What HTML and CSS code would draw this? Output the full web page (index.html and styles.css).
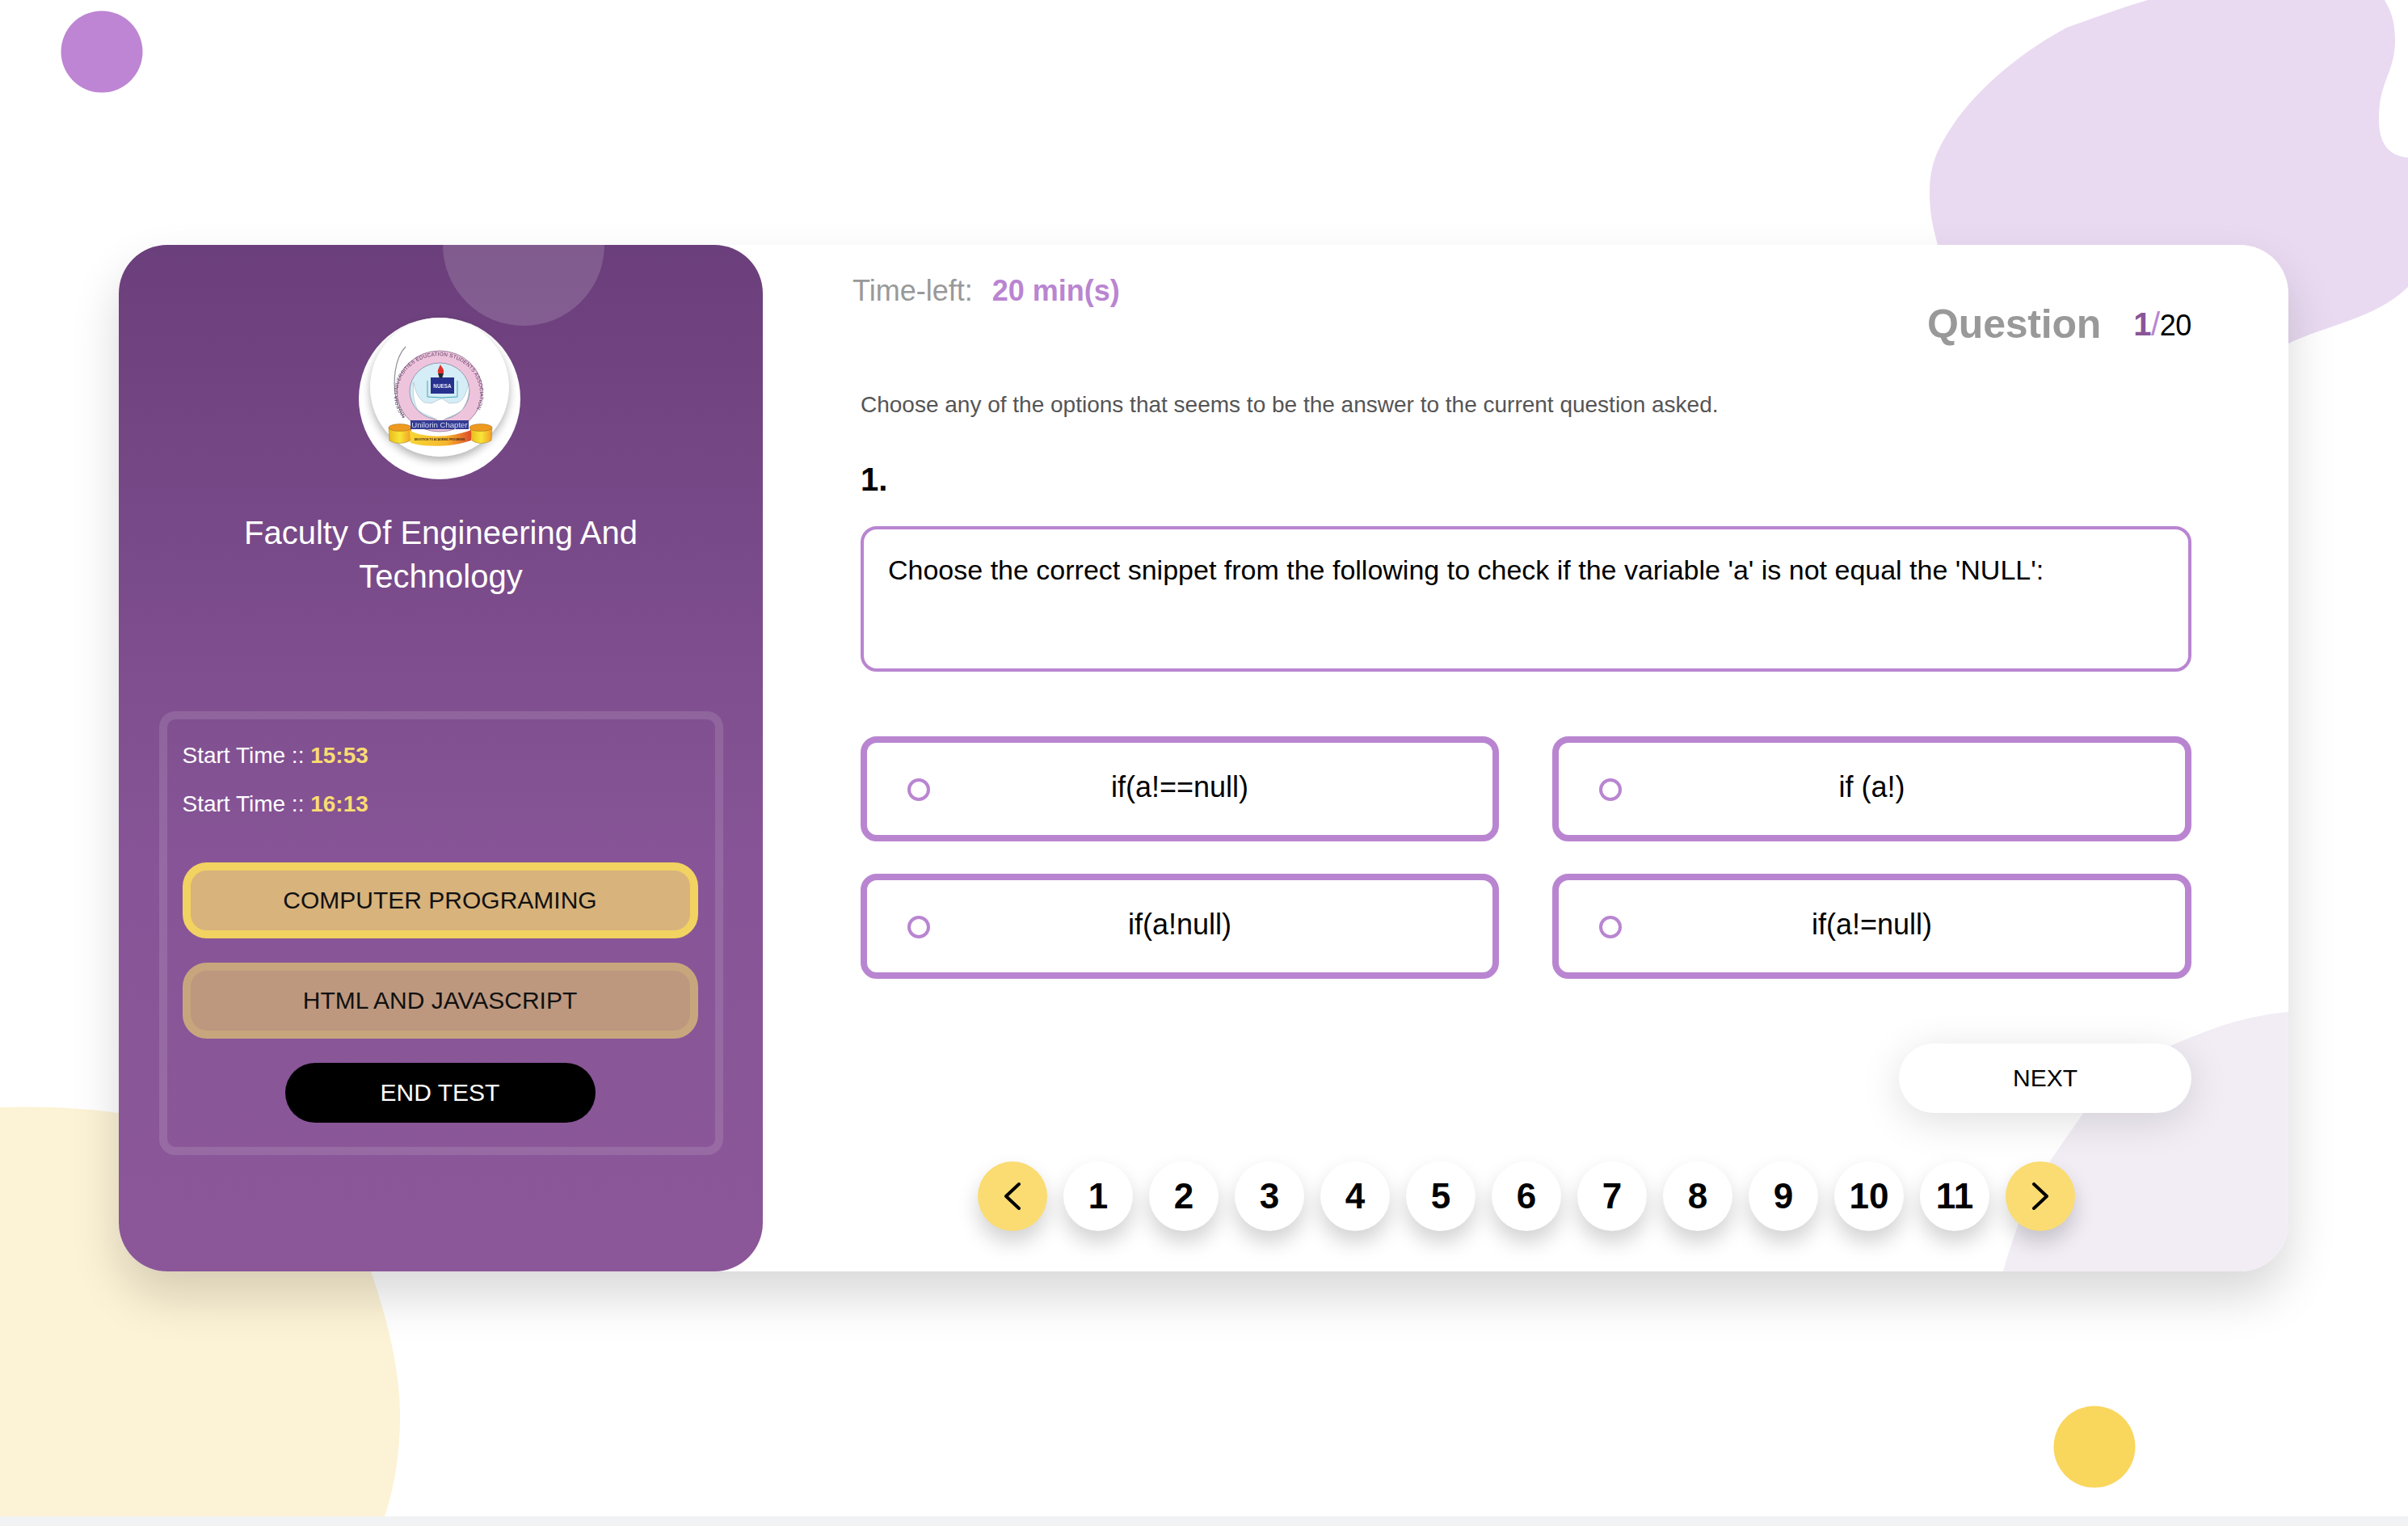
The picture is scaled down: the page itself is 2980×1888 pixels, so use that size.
FILE: index.html
```html
<!DOCTYPE html>
<html lang="en">
<head>
<meta charset="utf-8">
<title>Test</title>
<link rel="stylesheet" href="styles.css">
</head>
<body>
<div class="page">
  <svg class="backdrop" viewBox="0 0 2980 1876" aria-hidden="true">
    <path class="blob-purple" d="M2658 0C2624 10 2592 22 2558 34C2505 62 2452 105 2420 150C2396 185 2388 205 2388 240C2388 265 2393 285 2398 303L2832 425C2880 402 2940 394 2980 355L2980 195C2950 192 2944 170 2944 147C2944 100 2964 90 2964 50C2964 25 2958 12 2951 0Z"/>
    <path class="blob-yellow" d="M0 1370C60 1368 110 1372 147 1377L459 1573C482 1640 495 1700 495 1752C495 1800 488 1840 476 1876L0 1876Z"/>
    <circle class="dot-purple" cx="126" cy="64" r="50.5"/>
    <circle class="dot-yellow" cx="2592" cy="1790" r="50.5"/>
  </svg>

  <main class="card">
    <aside class="side">
      <div class="side-bubble"></div>
      <div class="logo">
        <div class="logo-inner">
          <svg class="emblem" viewBox="0 0 200 200">
            <defs>
              <path id="ringtext" d="M58 122A51 47 0 1 1 143 118"/>
              <linearGradient id="ribbon" x1="0" x2="1" y1="0" y2="0">
                <stop offset="0" stop-color="#f7d634"/><stop offset=".6" stop-color="#f6b52e"/><stop offset="1" stop-color="#dd4e2a"/>
              </linearGradient>
              <linearGradient id="cup" x1="0" x2="1" y1="0" y2="0">
                <stop offset="0" stop-color="#e9b91c"/><stop offset=".5" stop-color="#f8e538"/><stop offset="1" stop-color="#f29a25"/>
              </linearGradient>
            </defs>
            <g class="emblem-art">
              <path class="swoosh" d="M58 36C44 50 42 80 46 100C48 110 52 118 56 124"/>
              <ellipse class="ring" cx="100" cy="91" rx="53" ry="50"/>
              <ellipse class="disc" cx="100" cy="91" rx="37" ry="35"/>
              <text class="ring-label"><textPath href="#ringtext">NIGERIA UNIVERSITIES EDUCATION STUDENTS ASSOCIATION</textPath></text>
              <path class="dove" d="M68 80C66 96 69 106 73 114C80 120 90 122 98 127L101 131L104 127C112 122 122 120 128 114C133 106 138 96 136 82C133 94 130 101 123 105L112 106L103 100L98 102L90 106L81 105C74 100 70 92 68 80Z"/>
              <path class="page-line" d="M85 78L85 98L103 99L122 98L122 78"/>
              <rect class="book" x="89" y="74" width="29" height="20"/>
              <text class="book-label" x="103.500" y="86.500" text-anchor="middle">NUESA</text>
              <path class="flame" d="M101 58C99 62 97 66 98 68C99 71 104 71 105 68C106 64 103 62 101 58Z"/>
              <path class="torch" d="M98 69L105 69L103 75L100 75Z"/>
              <path class="cup" d="M37 136C42 131 60 131 65 136L64 152C55 157 44 156 38 152Z"/>
              <ellipse class="cup-top" cx="51" cy="136" rx="14" ry="4.500"/>
              <path class="cup" d="M138 136C142 131 160 131 165 136L164 152C155 157 146 156 140 152Z"/>
              <ellipse class="cup-top" cx="151" cy="136" rx="14" ry="4.500"/>
              <path class="ribbon" d="M63 140C85 150 115 148 139 139L139 152C115 160 85 161 64 155Z"/>
              <text class="ribbon-label" x="100" y="152" text-anchor="middle">DEVOTION TO ACADEMIC PROGRESS</text>
              <rect class="banner" x="64" y="127" width="72" height="11"/>
              <text class="banner-label" x="100" y="135.600" text-anchor="middle">Unilorin Chapter</text>
            </g>
          </svg>
        </div>
      </div>
      <h1 class="faculty">Faculty Of Engineering And Technology</h1>
      <section class="info">
        <p class="time-row">Start Time :: <b>15:53</b></p>
        <p class="time-row">Start Time :: <b>16:13</b></p>
        <button class="course course-active">COMPUTER PROGRAMING</button>
        <button class="course course-idle">HTML AND JAVASCRIPT</button>
        <button class="end-test">END TEST</button>
      </section>
    </aside>

    <section class="content">
      <svg class="content-blob" viewBox="0 0 353 321" aria-hidden="true">
        <path d="M353 0C290 6 250 24 209 41C160 70 130 90 99 125C70 170 30 210 0 321L353 321Z"/>
      </svg>
      <header class="topbar">
        <div class="time-left">Time-left: <strong>20 min(s)</strong></div>
        <div class="counter">
          <span class="counter-label">Question</span>
          <span class="counter-value"><b>1</b><i>/</i>20</span>
        </div>
      </header>
      <p class="hint">Choose any of the options that seems to be the answer to the current question asked.</p>
      <div class="q-number">1.</div>
      <div class="q-box">Choose the correct snippet from the following to check if the variable 'a' is not equal the 'NULL':</div>
      <div class="options">
        <label class="option"><span class="radio"></span>if(a!==null)</label>
        <label class="option"><span class="radio"></span>if (a!)</label>
        <label class="option"><span class="radio"></span>if(a!null)</label>
        <label class="option"><span class="radio"></span>if(a!=null)</label>
      </div>
      <div class="actions"><button class="next">NEXT</button></div>
      <nav class="pager">
        <button class="pg pg-nav"><svg class="chev" viewBox="0 0 20 34"><polyline points="18,2 2,17 18,32"/></svg></button>
        <button class="pg">1</button>
        <button class="pg">2</button>
        <button class="pg">3</button>
        <button class="pg">4</button>
        <button class="pg">5</button>
        <button class="pg">6</button>
        <button class="pg">7</button>
        <button class="pg">8</button>
        <button class="pg">9</button>
        <button class="pg">10</button>
        <button class="pg">11</button>
        <button class="pg pg-nav"><svg class="chev" viewBox="0 0 20 34"><polyline points="2,2 18,17 2,32"/></svg></button>
      </nav>
    </section>
  </main>
</div>
</body>
</html>
```

FILE: styles.css
```css
* { box-sizing: border-box; }

html, body { margin: 0; padding: 0; }

body {
  background: #f1f2f4;
  font-family: "Liberation Sans", Arial, sans-serif;
  color: #000;
  height: 1888px;
  overflow: hidden;
}

button { font-family: inherit; border: 0; padding: 0; cursor: pointer; }
p, h1 { margin: 0; }

.page {
  position: relative;
  height: 1876px;
  background: #fff;
  overflow: hidden;
  padding: 303px 148px 0 147px;
}

.backdrop { position: absolute; left: 0; top: 0; width: 2980px; height: 1876px; }
.blob-purple { fill: #e9daf1; }
.blob-yellow { fill: #fcf2d5; }
.dot-purple { fill: #bd85d3; }
.dot-yellow { fill: #f9d65c; }

.card {
  position: relative;
  display: flex;
  height: 1270px;
  background: #fff;
  border-radius: 60px;
  box-shadow: 0 30px 60px rgba(0, 0, 0, .155);
}

/* left panel */
.side {
  position: relative;
  flex: 0 0 797px;
  padding-top: 90px;
  overflow: hidden;
  border-radius: 60px;
  background: linear-gradient(180deg, #6b3f7b 0%, #875597 60%, #8b5799 100%);
  text-align: center;
}

.side-bubble {
  position: absolute;
  left: 401px;
  top: -100px;
  width: 200px;
  height: 200px;
  border-radius: 50%;
  background: rgba(255, 255, 255, .15);
}

.logo {
  width: 200px;
  height: 200px;
  margin-left: 297px;
  padding: 14px;
  border-radius: 50%;
  background: #fff;
}

.logo-inner {
  width: 172px;
  height: 172px;
  border-radius: 50%;
  background: #fff;
  box-shadow: 0 5px 11px rgba(0, 0, 0, .3);
}

.emblem { display: block; width: 200px; height: 200px; margin: -14px; }
.emblem-art { filter: blur(.35px); }
.swoosh { fill: none; stroke: #8d8d95; stroke-width: 1.2; }
.ring { fill: #eec4dc; stroke: #8a6d8f; stroke-width: .8; }
.disc { fill: #d5edf6; stroke: #7a89a6; stroke-width: .8; }
.ring-label { font-size: 6.4px; fill: #5c3a63; letter-spacing: .22px; }
.dove { fill: #fff; stroke: #8c9aa5; stroke-width: .4; }
.page-line { fill: none; stroke: #3fa7b5; stroke-width: 1; }
.book { fill: #27328f; }
.book-label { font-size: 6.4px; font-weight: 700; fill: #e9e9f6; }
.flame { fill: #e0302b; }
.torch { fill: #2a2a32; }
.cup { fill: url(#cup); stroke: #8a5a12; stroke-width: .4; }
.cup-top { fill: #ee9a1f; stroke: #8a5a12; stroke-width: .4; }
.ribbon { fill: url(#ribbon); }
.ribbon-label { font-size: 3.4px; font-weight: 700; fill: #3b2412; }
.banner { fill: #343c94; }
.banner-label { font-size: 9.6px; fill: #d8dcf2; }

.faculty {
  width: 520px;
  margin: 39px auto 0;
  font-size: 40px;
  line-height: 54px;
  font-weight: 400;
  color: #fff;
}

.info {
  display: flex;
  flex-direction: column;
  align-items: center;
  width: 698px;
  height: 549px;
  margin: 140px auto 0;
  padding: 15px 21px 0 19px;
  border: 10px solid rgba(255, 255, 255, .12);
  border-radius: 20px;
}

.time-row {
  align-self: flex-start;
  height: 60px;
  font-size: 28px;
  line-height: 60px;
  color: #fff;
  white-space: pre;
}
.time-row b { color: #fadc72; }

.course {
  width: 100%;
  height: 94px;
  border: 10px solid;
  border-radius: 30px;
  font-size: 30px;
  color: #111;
}
.course-active { margin-top: 42px; background: #d8b37c; border-color: #f2d261; }
.course-idle { margin-top: 30px; background: #bd987f; border-color: #c8a67d; }

.end-test {
  width: 384px;
  height: 74px;
  margin-top: 30px;
  border-radius: 37px;
  background: #000;
  color: #fff;
  font-size: 30px;
}

/* right panel */
.content {
  position: relative;
  flex: 1;
  min-width: 0;
  padding: 36px 120px 50px 121px;
  overflow: hidden;
  border-radius: 0 60px 60px 0;
}

.content-blob {
  position: absolute;
  right: 0;
  bottom: 0;
  width: 353px;
  height: 321px;
  fill: #f2edf5;
}

.content > * { position: relative; }
.content > .content-blob { position: absolute; }

.topbar {
  display: flex;
  justify-content: space-between;
  align-items: flex-start;
  height: 110px;
  margin-left: -10px;
}

.time-left {
  font-size: 36px;
  line-height: 42px;
  color: #999;
  white-space: pre;
}
.time-left strong { margin-left: 14px; color: #b985d1; }

.counter { display: flex; align-items: center; margin-top: 32px; height: 60px; }
.counter-label { font-size: 50px; font-weight: 700; letter-spacing: -.2px; color: #999; }
.counter-value { margin-left: 40px; font-size: 36px; letter-spacing: -.4px; }
.counter-value b { font-size: 40px; color: #8a5598; }
.counter-value i { font-size: 40px; font-style: normal; color: #b985d1; }

.hint {
  margin-top: 32px;
  font-size: 28px;
  line-height: 40px;
  color: #555;
}

.q-number {
  margin-top: 47px;
  height: 83px;
  font-size: 40px;
  font-weight: 700;
  line-height: 50px;
}

.q-box {
  height: 180px;
  padding: 28px 30px 0;
  border: 4px solid #b985d1;
  border-radius: 20px;
  font-size: 34px;
  line-height: 44px;
}

.options {
  display: grid;
  grid-template-columns: 790px 791px;
  justify-content: space-between;
  row-gap: 40px;
  margin-top: 80px;
}

.option {
  position: relative;
  display: flex;
  justify-content: center;
  align-items: center;
  height: 130px;
  padding-bottom: 4px;
  border: 8px solid #b985d1;
  border-radius: 20px;
  background: #fff;
  font-size: 36px;
}

.radio {
  position: absolute;
  left: 50px;
  top: 44px;
  width: 28px;
  height: 28px;
  border: 4px solid #b985d1;
  border-radius: 50%;
}

.actions { display: flex; justify-content: flex-end; margin-top: 80px; }

.next {
  width: 362px;
  height: 86px;
  border-radius: 43px;
  background: #fff;
  font-size: 30px;
  box-shadow: 0 10px 50px rgba(0, 0, 0, .13);
}

.pager { display: flex; justify-content: center; gap: 20px; margin: 60px -121px 0 -120px; }

.pg {
  display: flex;
  align-items: center;
  justify-content: center;
  width: 86px;
  height: 86px;
  border-radius: 50%;
  background: #fff;
  font-size: 44px;
  font-weight: 700;
  box-shadow: 0 14px 26px rgba(0, 0, 0, .18);
}
.pg-nav { background: #fadc72; }

.chev {
  width: 20px;
  height: 34px;
  fill: none;
  stroke: #000;
  stroke-width: 4;
  stroke-linecap: round;
  stroke-linejoin: round;
}
```
